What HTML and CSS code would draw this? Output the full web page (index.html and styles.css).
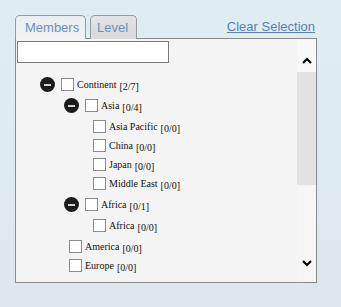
FILE: index.html
```html
<!DOCTYPE html>
<html>
<head>
<meta charset="utf-8">
<link rel="stylesheet" href="styles.css">
</head>
<body>
<div class="wrap">
  <div class="head">
    <div class="tab active">Members</div>
    <div class="tab">Level</div>
    <a class="clear" href="#">Clear Selection</a>
  </div>
  <div class="panel">
    <div class="content">
      <input class="search" type="text">
      <div class="tree">
        <div class="row"><span class="exp"></span><span class="cb"></span><span class="lbl">Continent</span><span class="cnt">[2/7]</span></div>
        <div class="kids">
          <div class="row l1"><span class="exp"></span><span class="cb"></span><span class="lbl">Asia</span><span class="cnt">[0/4]</span></div>
          <div class="kids">
            <div class="row l2 leaf"><span class="cb"></span><span class="lbl">Asia Pacific</span><span class="cnt">[0/0]</span></div>
            <div class="row l2 leaf"><span class="cb"></span><span class="lbl">China</span><span class="cnt">[0/0]</span></div>
            <div class="row l2 leaf"><span class="cb"></span><span class="lbl">Japan</span><span class="cnt">[0/0]</span></div>
            <div class="row l2 leaf"><span class="cb"></span><span class="lbl">Middle East</span><span class="cnt">[0/0]</span></div>
          </div>
          <div class="row l1"><span class="exp"></span><span class="cb"></span><span class="lbl">Africa</span><span class="cnt">[0/1]</span></div>
          <div class="kids">
            <div class="row l2 leaf"><span class="cb"></span><span class="lbl">Africa</span><span class="cnt">[0/0]</span></div>
          </div>
          <div class="row l1 leaf"><span class="cb"></span><span class="lbl">America</span><span class="cnt">[0/0]</span></div>
          <div class="row l1 leaf"><span class="cb"></span><span class="lbl">Europe</span><span class="cnt">[0/0]</span></div>
        </div>
      </div>
    </div>
    <div class="sbar">
      <div class="sbtn">
        <svg width="10" height="7" viewBox="0 0 10 7"><path d="M1 6 L5 2 L9 6" fill="none" stroke="#000" stroke-width="2.2"/></svg>
      </div>
      <div class="thumb"></div>
      <div class="strack"></div>
      <div class="sbtn down">
        <svg width="10" height="7" viewBox="0 0 10 7"><path d="M1 1 L5 5 L9 1" fill="none" stroke="#000" stroke-width="2.2"/></svg>
      </div>
    </div>
  </div>
</div>
</body>
</html>
```
FILE: styles.css
```css
html, body {
  margin: 0;
  padding: 0;
}
body {
  width: 341px;
  height: 307px;
  background: linear-gradient(#ddeef3, #dde7ec);
  font-family: "Liberation Sans", Arial, sans-serif;
}
.wrap {
  padding: 15px 0 0 15px;
  width: 302px;
}
.head {
  display: flex;
  align-items: flex-end;
  height: 23px;
}
.tab {
  box-sizing: border-box;
  height: 24px;
  margin-bottom: -1px;
  border: 1px solid #9a9a9a;
  border-bottom: none;
  border-radius: 5px 5px 0 0;
  font-size: 13px;
  color: #6a8fc3;
  padding: 4px 0 0 9px;
  position: relative;
}
.tab.active {
  width: 71px;
  background: linear-gradient(#e9eef0, #f2f3f3);
  z-index: 1;
}
.tab:not(.active) {
  width: 47px;
  margin-left: 4px;
  padding-left: 6px;
  background: linear-gradient(#e2e4e5, #d8d9da);
}
.clear {
  margin-left: auto;
  margin-right: 2px;
  align-self: flex-start;
  margin-top: 4px;
  font-size: 13px;
  color: #5a80ba;
  text-decoration: underline;
}
.panel {
  box-sizing: border-box;
  width: 302px;
  height: 245px;
  border: 1px solid #8a8a8a;
  background: #f4f4f4;
  display: flex;
}
.content {
  flex: 1;
  padding: 2px 0 0 1px;
}
.search {
  box-sizing: border-box;
  display: block;
  margin: 0;
  width: 152px;
  height: 22px;
  border: 1px solid #7a7a7a;
  background: #fff;
  padding: 0;
  outline: none;
}
.tree {
  margin-top: 12px;
  padding-left: 23px;
  font-family: "Liberation Serif", "Times New Roman", Times, serif;
  font-size: 10px;
  color: #111;
}
.kids {
  margin: 2px 0;
}
.row {
  display: flex;
  align-items: center;
  height: 19px;
}
.row.l1 { padding-left: 24px; }
.row.l2 { padding-left: 48px; }
.exp {
  width: 15px;
  height: 15px;
  border-radius: 50%;
  background: #1b1b1b;
  margin-right: 6px;
  display: flex;
  align-items: center;
  justify-content: center;
}
.exp::after {
  content: "";
  width: 7px;
  height: 2px;
  background: #d0d0d0;
}
.cb {
  box-sizing: border-box;
  width: 13px;
  height: 13px;
  border: 1px solid #8c8c8c;
  background: #fff;
  margin-right: 3px;
}
.leaf .cb {
  margin-left: 5px;
}
.lbl, .cnt {
  font-family: "Liberation Serif", "Times New Roman", Times, serif;
}
.cnt {
  margin-left: 3px;
  position: relative;
  top: 2px;
}
.sbar {
  width: 19px;
  display: flex;
  flex-direction: column;
  background: #f6f6f6;
}
.sbtn {
  box-sizing: border-box;
  height: 33px;
  display: flex;
  justify-content: center;
  align-items: center;
  background: #f8f8f8;
  padding: 10px 0 0 1px;
}
.sbtn.down {
  height: 10px;
  padding-top: 0;
  margin-bottom: 14px;
  background: transparent;
}
.thumb {
  height: 113px;
  background: #e2e2e2;
}
.strack {
  flex: 1;
}
```
